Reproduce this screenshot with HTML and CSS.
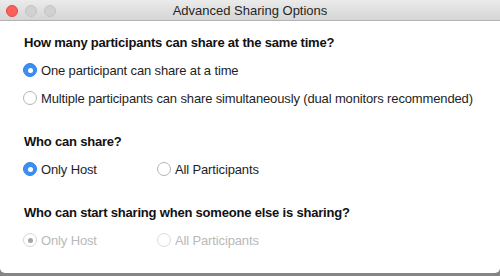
FILE: index.html
```html
<!DOCTYPE html>
<html lang="en">
<head>
    <meta charset="UTF-8">
    <title>Advanced Sharing Options</title>
    <link rel="stylesheet" href="styles.css">
</head>
<body>
    <div class="window">
        <div class="titlebar">
            <div class="lights">
                <span class="light close"></span>
                <span class="light"></span>
                <span class="light"></span>
            </div>
            <div class="title">Advanced Sharing Options</div>
        </div>
        <div class="content">
            <div class="section first">
                <h3>How many participants can share at the same time?</h3>
                <div class="row">
                    <label class="radio checked"><span class="dot"></span>One participant can share at a time</label>
                </div>
                <div class="row">
                    <label class="radio"><span class="dot"></span>Multiple participants can share simultaneously (dual monitors recommended)</label>
                </div>
            </div>
            <div class="section">
                <h3>Who can share?</h3>
                <div class="row">
                    <label class="radio checked wide"><span class="dot"></span>Only Host</label>
                    <label class="radio"><span class="dot"></span>All Participants</label>
                </div>
            </div>
            <div class="section">
                <h3>Who can start sharing when someone else is sharing?</h3>
                <div class="row disabled">
                    <label class="radio checked wide"><span class="dot"></span>Only Host</label>
                    <label class="radio"><span class="dot"></span>All Participants</label>
                </div>
            </div>
        </div>
    </div>
</body>
</html>
```

FILE: styles.css
```css
* {
    margin: 0;
    padding: 0;
    box-sizing: border-box;
}
body {
    width: 500px;
    height: 276px;
    background-color: #858585;
    font-family: "Liberation Sans", Arial, sans-serif;
    font-size: 13px;
    color: #1e1e1e;
    overflow: hidden;
}
.window {
    height: 273px;
    background-color: #fff;
    border-radius: 0 0 5px 5px;
    overflow: hidden;
}
.titlebar {
    position: relative;
    height: 21px;
    background: linear-gradient(#ebebeb, #d5d5d5);
    border-bottom: 1px solid #b3b3b3;
    display: flex;
    align-items: center;
    justify-content: center;
}
.lights {
    position: absolute;
    left: 6px;
    top: 5px;
    display: flex;
    gap: 7px;
}
.light {
    width: 12px;
    height: 12px;
    border-radius: 50%;
    background-color: #d1d1d1;
    border: 1px solid #c4c4c4;
}
.light.close {
    background-color: #fc605c;
    border-color: #e5483f;
}
.title {
    color: #262626;
    font-size: 13px;
    padding-top: 1px;
}
.content {
    padding: 0 23px;
}
.section h3 {
    font-size: 13px;
    font-weight: bold;
    line-height: 16px;
    letter-spacing: -0.2px;
    padding-left: 1px;
    margin-top: 22px;
    margin-bottom: 5px;
    color: #111;
}
.section.first h3 {
    margin-top: 14px;
}
.row {
    display: flex;
    align-items: center;
    height: 28px;
}
.radio {
    display: flex;
    align-items: center;
    gap: 4px;
    white-space: nowrap;
    letter-spacing: -0.14px;
}
.radio.wide {
    width: 134px;
}
.dot {
    width: 14px;
    height: 14px;
    border-radius: 50%;
    border: 1px solid #b4b4b4;
    background-color: #fff;
    display: flex;
    align-items: center;
    justify-content: center;
}
.radio.checked .dot {
    background-color: #3b8ef3;
    border-color: #3181ea;
}
.radio.checked .dot::after {
    content: "";
    width: 5px;
    height: 5px;
    border-radius: 50%;
    background-color: #fff;
}
.disabled .radio {
    color: #b9b9b9;
}
.disabled .dot {
    border-color: #dcdcdc;
}
.disabled .radio.checked .dot {
    background-color: #fff;
    border-color: #d6d6d6;
}
.disabled .radio.checked .dot::after {
    background-color: #a5a5a5;
}
```
